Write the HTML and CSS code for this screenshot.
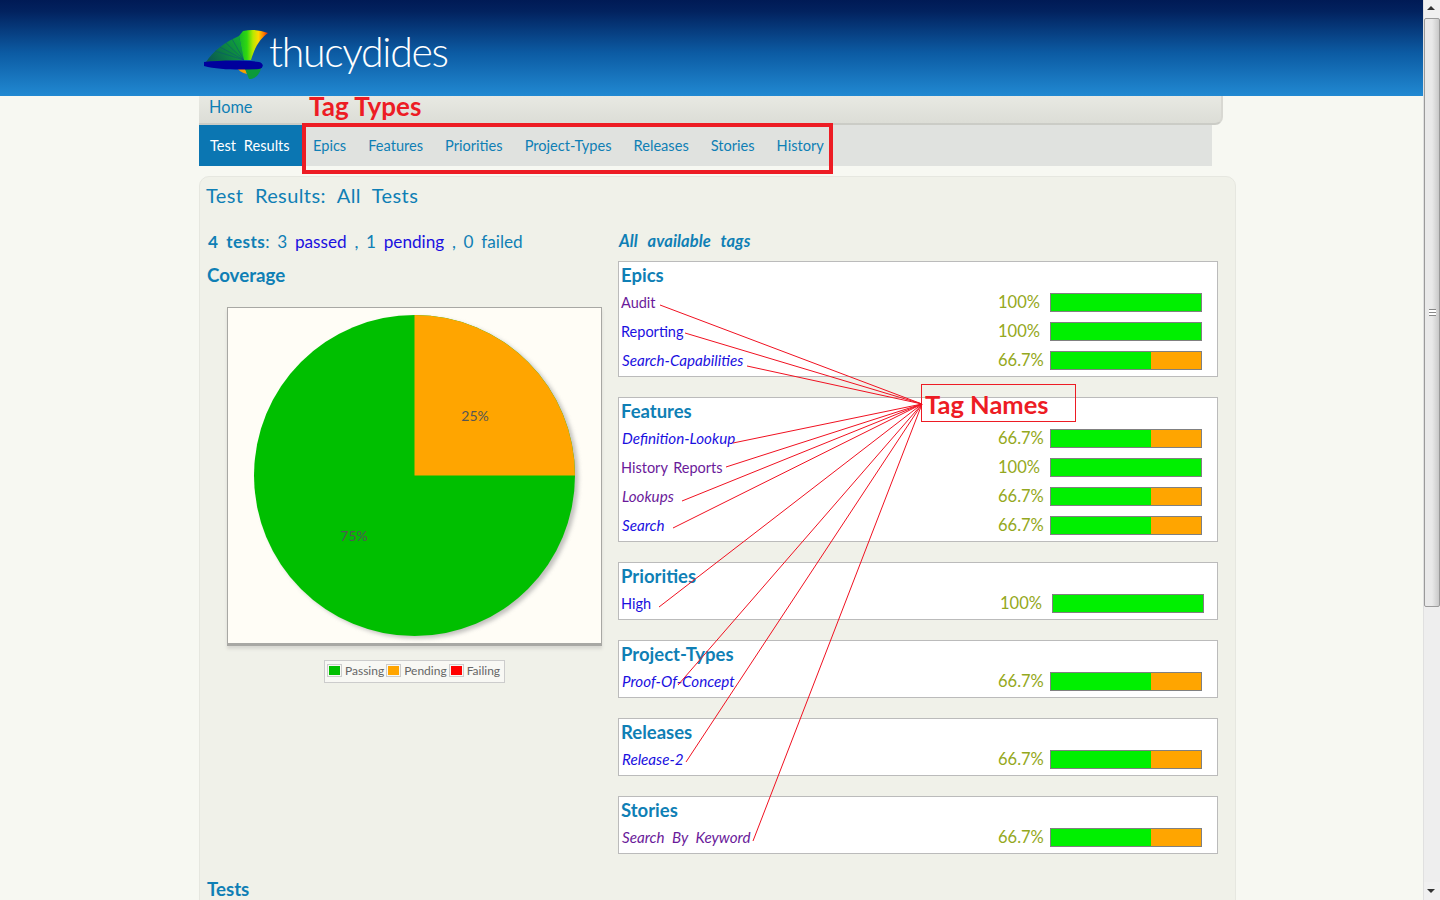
FILE: index.html
```html
<!DOCTYPE html>
<html lang="en">
<head>
    <meta charset="UTF-8">
    <title>Thucydides Reports</title>
    <link rel="stylesheet" href="styles.css">
</head>
<body>
<div class="window">
    <div class="page">
        <header class="banner">
            <svg class="logo-mark" width="70" height="60" viewBox="0 0 70 60">
                <defs>
                    <linearGradient id="fan-bright" gradientUnits="userSpaceOnUse" x1="37" y1="0" x2="67" y2="0">
                        <stop offset="0" stop-color="#10b030"/>
                        <stop offset="0.3" stop-color="#30d810"/>
                        <stop offset="0.5" stop-color="#b8e800"/>
                        <stop offset="0.68" stop-color="#ffd800"/>
                        <stop offset="0.85" stop-color="#ff8000"/>
                        <stop offset="1" stop-color="#e82000"/>
                    </linearGradient>
                    <linearGradient id="fan-dark" gradientUnits="userSpaceOnUse" x1="8" y1="36" x2="40" y2="14">
                        <stop offset="0" stop-color="#0a5a50"/>
                        <stop offset="1" stop-color="#10a838"/>
                    </linearGradient>
                </defs>
                <path d="M43 36 L5 38 C12 27 24 18 38 12 Z" fill="url(#fan-dark)"/>
                <g stroke="#0b4a7c" stroke-opacity="0.45" fill="none">
                    <path d="M43 36 L31 15"/>
                    <path d="M43 36 L25 19"/>
                    <path d="M43 36 L19 23"/>
                    <path d="M43 36 L14 27"/>
                </g>
                <path d="M43 36 L38 12 L42 7 Q55 4 67 9 C60 14 54 22 50 36 Z" fill="url(#fan-bright)"/>
                <path d="M34 42 L43 42 L46 50 C41 49 37 46 34 42 Z" fill="#f5a000"/>
                <path d="M43 42 L60 42 C60 49 55 55 48 55 Z" fill="#0c9a3a"/>
                <path d="M3 38 C20 36 45 36 58 38 C63 39 63 44 58 45 C40 46 18 46 3 42 Z" fill="#00009c"/>
            </svg>
            <span class="logo-text">thucydides</span>
        </header>

        <nav class="menu">
            <div class="menu-home"><a href="#">Home</a></div>
            <div class="menu-tabs">
                <a class="tab tab-active" href="#">Test Results</a>
                <a class="tab" href="#">Epics</a>
                <a class="tab" href="#">Features</a>
                <a class="tab" href="#">Priorities</a>
                <a class="tab" href="#">Project-Types</a>
                <a class="tab" href="#">Releases</a>
                <a class="tab" href="#">Stories</a>
                <a class="tab" href="#">History</a>
            </div>
        </nav>

        <main class="panel">
            <h1 class="panel-title">Test Results: All Tests</h1>
            <div class="columns">
                <section class="left">
                    <p class="summary"><b>4 tests</b>: 3 <a href="#">passed</a> , 1 <a href="#">pending</a> , 0 failed</p>
                    <h2 class="heading">Coverage</h2>
                    <div class="chart">
                        <svg width="375" height="338" viewBox="0 0 375 338">
                            <defs>
                                <filter id="blur"><feGaussianBlur stdDeviation="2"/></filter>
                            </defs>
                            <circle cx="191" cy="171" r="160.500" fill="#999" opacity="0.6" filter="url(#blur)"/>
                            <circle cx="187.500" cy="168.500" r="160.500" fill="#00bf00"/>
                            <path d="M187.500 168.500 L187.500 8 A160.500 160.500 0 0 1 348 168.500 Z" fill="#ffa500"/>
                            <text class="pie-label" x="248" y="114" text-anchor="middle">25%</text>
                            <text class="pie-label" x="127" y="234" text-anchor="middle">75%</text>
                        </svg>
                    </div>
                    <div class="legend">
                        <span class="swatch"><i class="swatch-pass"></i></span>Passing
                        <span class="swatch"><i class="swatch-pend"></i></span>Pending
                        <span class="swatch"><i class="swatch-fail"></i></span>Failing
                    </div>
                </section>

                <section class="right">
                    <h3 class="tags-title">All available tags</h3>

                    <div class="tag-box">
                        <h4>Epics</h4>
                        <div class="tag-row"><a class="visited" href="#">Audit</a><span class="pct">100%</span><span class="bar"><i class="full"></i></span></div>
                        <div class="tag-row"><a href="#">Reporting</a><span class="pct">100%</span><span class="bar"><i class="full"></i></span></div>
                        <div class="tag-row"><a class="feature" href="#">Search-Capabilities</a><span class="pct">66.7%</span><span class="bar"><i></i></span></div>
                    </div>

                    <div class="tag-box">
                        <h4>Features</h4>
                        <div class="tag-row"><a class="feature" href="#">Definition-Lookup</a><span class="pct">66.7%</span><span class="bar"><i></i></span></div>
                        <div class="tag-row"><a class="visited" href="#">History Reports</a><span class="pct">100%</span><span class="bar"><i class="full"></i></span></div>
                        <div class="tag-row"><a class="feature visited" href="#">Lookups</a><span class="pct">66.7%</span><span class="bar"><i></i></span></div>
                        <div class="tag-row"><a class="feature" href="#">Search</a><span class="pct">66.7%</span><span class="bar"><i></i></span></div>
                    </div>

                    <div class="tag-box tag-box-wide">
                        <h4>Priorities</h4>
                        <div class="tag-row"><a href="#">High</a><span class="pct">100%</span><span class="bar"><i class="full"></i></span></div>
                    </div>

                    <div class="tag-box">
                        <h4>Project-Types</h4>
                        <div class="tag-row"><a class="feature" href="#">Proof-Of-Concept</a><span class="pct">66.7%</span><span class="bar"><i></i></span></div>
                    </div>

                    <div class="tag-box">
                        <h4>Releases</h4>
                        <div class="tag-row"><a class="feature" href="#">Release-2</a><span class="pct">66.7%</span><span class="bar"><i></i></span></div>
                    </div>

                    <div class="tag-box">
                        <h4>Stories</h4>
                        <div class="tag-row"><a class="feature visited" href="#">Search By Keyword</a><span class="pct">66.7%</span><span class="bar"><i></i></span></div>
                    </div>
                </section>
            </div>
            <h2 class="heading heading-tests">Tests</h2>
        </main>
    </div>

    <div class="scrollbar">
        <span class="arrow arrow-up"></span>
        <div class="thumb"><span class="grip"></span></div>
        <span class="arrow arrow-down"></span>
    </div>

    <!-- annotations drawn on top of the screenshot -->
    <div class="note-types-label">Tag Types</div>
    <div class="note-types-box"></div>
    <div class="note-names-box">Tag Names</div>
    <svg class="note-lines" width="1440" height="900" viewBox="0 0 1440 900">
        <g stroke="#f01020" fill="none">
            <path d="M660 305 L922 404"/>
            <path d="M685 333 L922 404"/>
            <path d="M747 366 L922 404"/>
            <path d="M733 443 L922 404"/>
            <path d="M726 467 L922 404"/>
            <path d="M682 501 L922 404"/>
            <path d="M673 528 L922 404"/>
            <path d="M659 607 L922 404"/>
            <path d="M678 685 L922 404"/>
            <path d="M686 762 L922 404"/>
            <path d="M753 841 L922 404"/>
        </g>
    </svg>
</div>
</body>
</html>
```

FILE: styles.css
```css
html, body {
    margin: 0;
    height: 100%;
    overflow: hidden;
}
body {
    background-color: #f7f8f2;
    font-family: Lato, "Open Sans", sans-serif;
    color: #0f7fb5;
}
a {
    text-decoration: none;
    color: inherit;
}
.window {
    position: relative;
    display: flex;
    width: 1440px;
    height: 900px;
    overflow: hidden;
}
.page {
    width: 1423px;
    flex: none;
}

/* banner */
.banner {
    height: 96px;
    box-sizing: border-box;
    padding: 24px 0 0 201px;
    display: flex;
    align-items: flex-start;
    background: linear-gradient(#001a55 0%, #02225f 12%, #0c5ba3 55%, #2189d2 100%);
}
.logo-mark {
    flex: none;
}
.logo-text {
    margin-left: -2px;
    color: #fff;
    font-size: 41px;
    font-weight: 300;
    line-height: 56px;
    letter-spacing: -1.3px;
}

/* menu */
.menu {
    margin-left: 199px;
}
.menu-home {
    width: 1024px;
    height: 29px;
    box-sizing: border-box;
    padding-left: 10px;
    background: linear-gradient(#e8e9e3, #dcddd6);
    border-bottom: 2px solid #cbccc6;
    border-right: 2px solid #d8d8d2;
    border-bottom-right-radius: 8px;
    font-size: 16.300px;
    line-height: 22px;
}
.menu-tabs {
    width: 1013px;
    height: 41px;
    display: flex;
    background-color: #e0e2df;
    font-size: 14.600px;
    line-height: 41px;
}
.tab {
    padding: 0 11px;
    white-space: nowrap;
}
.tab-active {
    width: 103px;
    box-sizing: border-box;
    background-color: #0b76b2;
    color: #fff;
    word-spacing: 4px;
}

/* main panel */
.panel {
    margin: 10px 0 0 199px;
    width: 1037px;
    height: 760px;
    box-sizing: border-box;
    padding: 5px 6px;
    background-color: #f0f1e9;
    border: 1px solid #e6e7e0;
    border-radius: 10px;
}
.panel-title {
    margin: 0;
    font-size: 20px;
    font-weight: 400;
    line-height: 26px;
    letter-spacing: 0.4px;
    word-spacing: 6px;
}
.columns {
    display: flex;
    margin-top: 20px;
}
.left {
    width: 412px;
    flex: none;
}
.summary {
    margin: 3px 0 0 2px;
    font-size: 17.200px;
    line-height: 22px;
    word-spacing: 3.300px;
}
.summary b {
    letter-spacing: 0.4px;
}
.summary a {
    color: #1a10e0;
}
.heading {
    margin: 10px 0 0 1px;
    font-size: 18.700px;
    font-weight: 700;
    line-height: 24px;
}
.chart {
    width: 373px;
    height: 335px;
    margin: 20px 0 0 21px;
    background-color: #fffdf6;
    border: 1px solid #a8a8a4;
    border-bottom-width: 3px;
    box-shadow: 0 3px 3px #d8d8d2;
    overflow: hidden;
}
.chart svg {
    display: block;
    margin: -1px;
}
.pie-label {
    font-size: 14px;
    fill: #555;
}
.legend {
    display: flex;
    align-items: center;
    width: 181px;
    height: 23px;
    box-sizing: border-box;
    margin: 14px 0 0 118px;
    padding: 0 2px 2px;
    background-color: #f8f8f4;
    border: 1px solid #ccc;
    font-size: 12px;
    color: #666;
    white-space: nowrap;
}
.swatch {
    display: block;
    margin: 0 3px 0 2px;
    padding: 1px;
    border: 1px solid #ccc;
    line-height: 0;
}
.swatch:first-child {
    margin-left: 0;
}
.swatch i {
    display: block;
    width: 11px;
    height: 9px;
}
.swatch-pass { background-color: #00bf00; }
.swatch-pend { background-color: #ffa500; }
.swatch-fail { background-color: #ff0000; }

/* tag tables */
.right {
    width: 600px;
    flex: none;
}
.tags-title {
    margin: 0 0 8px;
    padding: 1px 0 0 1px;
    font-size: 16.500px;
    font-style: italic;
    font-weight: 700;
    line-height: 24px;
    letter-spacing: 0.1px;
    word-spacing: 6px;
}
.tag-box {
    width: 600px;
    box-sizing: border-box;
    margin-bottom: 20px;
    padding: 1px 15px 1px 2px;
    background-color: #fff;
    border: 1px solid #bbb;
}
.tag-box h4 {
    margin: 0 0 1px;
    font-size: 18.500px;
    font-weight: 700;
    line-height: 24px;
}
.tag-row {
    display: grid;
    grid-template-columns: 377px 52px 152px;
    align-items: center;
    height: 29px;
    font-size: 14.500px;
    color: #1a10e0;
}
.tag-row a {
    white-space: nowrap;
    word-spacing: 2px;
}
.tag-row .visited {
    color: #6a1a9a;
}
.tag-row .feature {
    margin: 0 0 2px 1px;
    font-size: 15.200px;
    font-style: italic;
    word-spacing: 4px;
}
.tag-box-wide {
    padding-right: 13px;
}
.tag-box-wide .tag-row {
    grid-template-columns: 379px 52px 152px;
}
.pct {
    margin-bottom: 2px;
    font-size: 16.500px;
    color: #94a820;
}
.bar {
    display: block;
    height: 19px;
    box-sizing: border-box;
    background-color: #ffa500;
    border: 1px solid #808080;
}
.bar i {
    display: block;
    width: 100px;
    height: 100%;
    background-color: #00f000;
}
.bar .full {
    width: 100%;
}
.heading-tests {
    margin-top: 3px;
}

/* browser scrollbar */
.scrollbar {
    width: 17px;
    flex: none;
    height: 900px;
    display: flex;
    flex-direction: column;
    background-color: #eee;
    border-left: 1px solid #e0e0e0;
    box-sizing: border-box;
}
.arrow {
    height: 18px;
    flex: none;
    position: relative;
    background-color: #f0f0f0;
}
.arrow::after {
    content: "";
    position: absolute;
    left: 3px;
    width: 0;
    height: 0;
    border-left: 4px solid transparent;
    border-right: 4px solid transparent;
}
.arrow-up::after {
    top: 6px;
    border-bottom: 4px solid #333;
}
.arrow-down {
    margin-top: auto;
}
.arrow-down::after {
    top: 7px;
    border-top: 4px solid #333;
}
.thumb {
    height: 589px;
    box-sizing: border-box;
    display: flex;
    align-items: center;
    justify-content: center;
    background: linear-gradient(90deg, #e9e9e9 50%, #c9c9c9);
    border: 1px solid #9a9a9a;
    border-radius: 2px;
}
.grip {
    width: 7px;
    height: 5px;
    border-top: 1px solid #888;
    border-bottom: 1px solid #888;
    background: linear-gradient(#fff 40%, #888 40%, #888 60%, #fff 60%);
}

/* annotations */
.note-types-label {
    position: absolute;
    left: 309px;
    top: 90px;
    color: #ed1c24;
    font-family: Lato, sans-serif;
    font-size: 26px;
    font-weight: 700;
    line-height: 32px;
}
.note-types-box {
    position: absolute;
    left: 302px;
    top: 123px;
    width: 523px;
    height: 43px;
    border: 4px solid #ed1c24;
}
.note-names-box {
    position: absolute;
    left: 921px;
    top: 384px;
    width: 155px;
    height: 38px;
    box-sizing: border-box;
    padding-left: 3px;
    border: 1px solid #ed1c24;
    color: #ed1c24;
    font-family: Lato, sans-serif;
    font-size: 25.500px;
    font-weight: 700;
    line-height: 38px;
}
.note-lines {
    position: absolute;
    left: 0;
    top: 0;
    pointer-events: none;
}
```
